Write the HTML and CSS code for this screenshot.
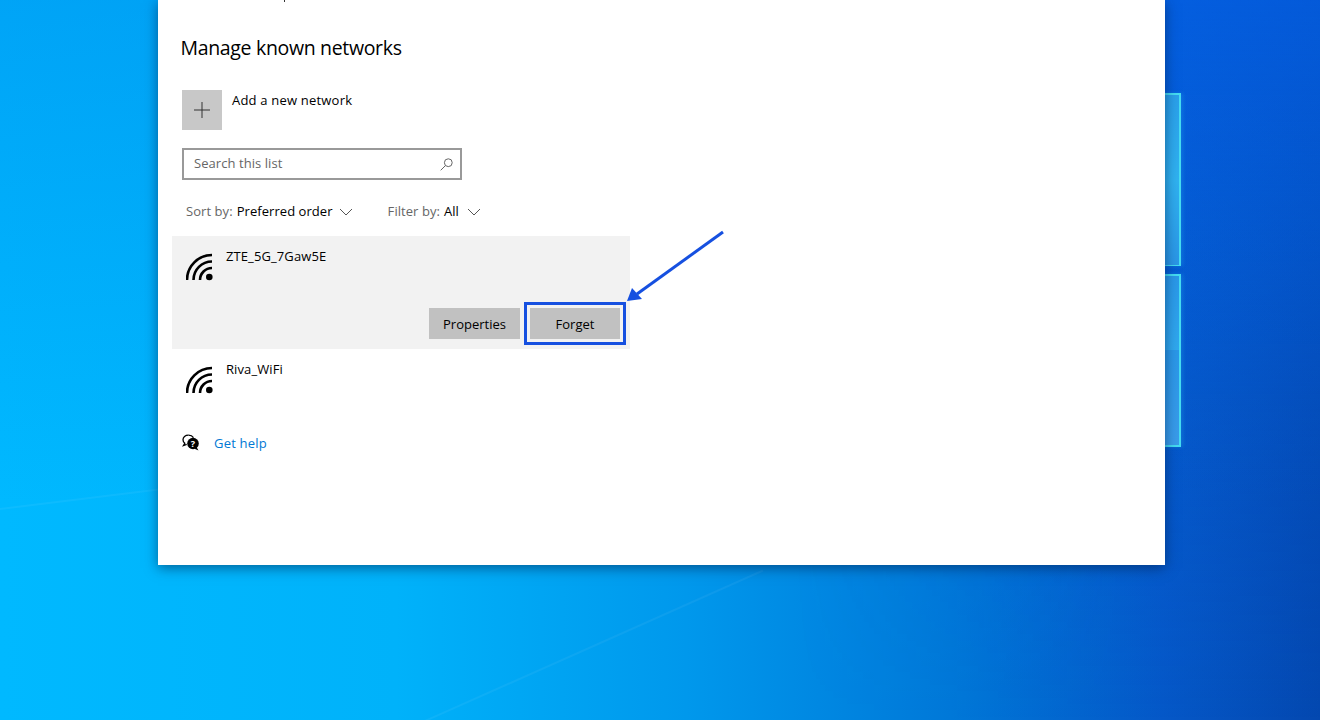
FILE: index.html
```html
<!DOCTYPE html>
<html lang="en">
<head>
<meta charset="utf-8">
<title>Manage known networks</title>
<link rel="stylesheet" href="styles.css">
</head>
<body>
<div class="desktop">
  <div class="beam beam-a"></div>
  <div class="beam beam-b"></div>
  <div class="pane pane-top"></div>
  <div class="pane pane-bottom"></div>
  <main class="window">
    <div class="clip-mark"></div>
    <h1 class="title">Manage known networks</h1>
    <div class="add-row">
      <div class="add-tile">
        <svg width="18" height="18" viewBox="0 0 18 18"><path d="M9 1v16M1 9h16" stroke="#333" stroke-width="1" fill="none"/></svg>
      </div>
      <span class="add-label">Add a new network</span>
    </div>
    <div class="search">
      <span class="search-text">Search this list</span>
      <svg class="search-icon" width="13" height="13" viewBox="0 0 13 13"><circle cx="8.300" cy="4.700" r="3.900" stroke="#666" fill="none"/><path d="M5.500 7.500L.7 12.300" stroke="#666" fill="none"/></svg>
    </div>
    <div class="filters">
      <div class="filter"><span class="muted">Sort by:</span> <span class="value">Preferred order</span>
        <svg class="chev" width="14" height="8" viewBox="0 0 14 8"><path d="M1 1l6 6 6-6" stroke="#555" fill="none"/></svg>
      </div>
      <div class="filter"><span class="muted">Filter by:</span> <span class="value">All</span>
        <svg class="chev" width="14" height="8" viewBox="0 0 14 8"><path d="M1 1l6 6 6-6" stroke="#555" fill="none"/></svg>
      </div>
    </div>
    <section class="network selected">
      <div class="net-head">
        <svg class="wifi" width="28" height="28" viewBox="0 0 28 28"><g fill="none" stroke="#000" stroke-width="2.600"><path d="M1 27A25 25 0 0 1 26 2"/><path d="M7.500 27A18.500 18.500 0 0 1 26 8.500"/><path d="M14 27A12 12 0 0 1 26 15"/></g><circle cx="23.300" cy="24" r="3.300" fill="#000"/></svg>
        <span class="net-name">ZTE_5G_7Gaw5E</span>
      </div>
      <div class="actions">
        <button class="btn btn-props">Properties</button>
        <button class="btn btn-forget">Forget</button>
      </div>
    </section>
    <section class="network">
      <div class="net-head">
        <svg class="wifi" width="28" height="28" viewBox="0 0 28 28"><g fill="none" stroke="#000" stroke-width="2.600"><path d="M1 27A25 25 0 0 1 26 2"/><path d="M7.500 27A18.500 18.500 0 0 1 26 8.500"/><path d="M14 27A12 12 0 0 1 26 15"/></g><circle cx="23.300" cy="24" r="3.300" fill="#000"/></svg>
        <span class="net-name">Riva_WiFi</span>
      </div>
    </section>
    <a class="help" href="#">
      <svg class="help-icon" width="18" height="18" viewBox="0 0 18 18"><path d="M6.500 1.200C3.200 1.200 1 3.200 1 5.800c0 1.500.7 2.700 1.800 3.500L1.500 11.500l3.200-1.200" fill="none" stroke="#000" stroke-width="1.300"/><path d="M6.500 1.200c2.300 0 4 1 5 2.500" fill="none" stroke="#000" stroke-width="1.300"/><circle cx="11" cy="9.500" r="5.800" fill="#000"/><path d="M14.500 13l2 3.500-4-1.800z" fill="#000"/><text class="help-q" x="11" y="12.600" text-anchor="middle">?</text></svg>
      <span>Get help</span>
    </a>
  </main>
  <div class="highlight"></div>
  <svg class="arrow" width="110" height="80" viewBox="0 0 110 80"><path d="M103 2L17 64" stroke="#1650e0" stroke-width="3" fill="none"/><path d="M7 71L12 58 22 69z" fill="#1650e0"/></svg>
</div>
</body>
</html>
```
FILE: styles.css
```css
* { box-sizing: border-box; }
html, body { margin: 0; height: 100%; }
body { font-family: "Open Sans", "Noto Sans", sans-serif; color: #000; overflow: hidden; }
.desktop {
  position: relative; width: 1320px; height: 720px; overflow: hidden;
  background:
    linear-gradient(180deg, rgba(0,110,225,.28) 0%, rgba(0,110,225,.12) 40%, rgba(0,110,225,0) 70%),
    linear-gradient(90deg, #00b9ff 0%, #00b2fa 30%, #0098ec 52%, #0078d8 72%, #0558c8 88%, #0448b0 100%);
}
.desktop::before {
  content: ""; position: absolute; inset: 0;
  background: linear-gradient(180deg, rgba(5,95,235,.6) 0%, rgba(5,95,225,.2) 55%, rgba(0,0,0,0) 100%);
  -webkit-mask-image: linear-gradient(90deg, transparent 0%, transparent 60%, #000 85%);
  mask-image: linear-gradient(90deg, transparent 0%, transparent 60%, #000 85%);
}
.beam { position: absolute; height: 2px; background: rgba(255,255,255,.05); transform-origin: left center; }
.beam-a { left: 0; top: 508px; width: 170px; transform: rotate(-7deg); }
.beam-b { left: 425px; top: 720px; width: 370px; transform: rotate(-24deg); }
.pane {
  position: absolute; left: 1100px; width: 81px;
  background: linear-gradient(180deg, #2aa0ea 0%, #30b2f0 50%, #2a96e6 100%);
  border: 2px solid #45dcf2; border-left: 0;
  box-shadow: 2px 0 4px rgba(60,210,255,.2);
}
.pane-top { top: 93px; height: 173px; border-bottom-width: 1px; }
.pane-bottom { top: 274px; height: 173px; background: linear-gradient(180deg, #2a98e8 0%, #30a8ee 44%, #2a98e8 44%, #3a9cea 100%); }
.window {
  position: absolute; left: 158px; top: 0; width: 1007px; height: 565px;
  background: #fff; padding: 34px 22px 0 14px; overflow: hidden;
  box-shadow: 0 3px 12px rgba(0,30,70,.55);
}
.clip-mark { position: absolute; left: 126px; top: 0; width: 1px; height: 2px; background: #333; }
.title { margin: 0 0 0 8.500px; font-size: 19.500px; line-height: 28px; font-weight: 400; letter-spacing: -.33px; }
.add-row { display: flex; gap: 10px; margin: 28px 0 0 10px; }
.add-tile { width: 40px; height: 40px; background: #c8c8c8; display: flex; align-items: center; justify-content: center; }
.add-label { font-size: 13px; line-height: 20px; letter-spacing: .2px; }
.search {
  display: flex; align-items: center; justify-content: space-between;
  width: 280px; height: 32px; margin: 18px 0 0 10px; padding: 0 7px 2px 10px; border: 2px solid #999;
}
.search-text { font-size: 13px; color: #666; letter-spacing: .06px; }
.search-icon { margin-top: 2px; }
.filters { display: flex; gap: 35px; margin: 19px 0 0 14px; height: 24px; align-items: center; font-size: 13px; letter-spacing: .06px; }
.filter { display: flex; align-items: center; gap: 4px; }
.muted { color: #666; }
.value { color: #000; }
.chev { margin-left: 4px; margin-top: 1px; }
.filter:first-child .chev { margin-left: 2px; }
.network { width: 458px; height: 82px; position: relative; }
.selected { height: 113px; background: #f2f2f2; margin-top: 13px; }
.net-head { display: flex; gap: 12px; padding: 9px 0 0 14px; }
.wifi { flex: none; margin-top: 8px; }
.net-name { font-size: 13px; line-height: 22px; letter-spacing: .1px; }
.actions { position: absolute; right: 10px; bottom: 10px; display: flex; gap: 10px; }
.btn { height: 31px; border: 0; background: #c1c1c1; font: inherit; font-size: 13px; color: #000; padding: 0; }
.btn-props { width: 91px; }
.btn-forget { width: 90px; }
.help { display: flex; align-items: center; gap: 14px; margin: 0 0 0 10px; color: #0078d4; text-decoration: none; font-size: 13px; letter-spacing: .2px; height: 24px; }
.help-icon { flex: none; }
.help-q { font-size: 9px; font-weight: 700; fill: #fff; font-family: "Open Sans", sans-serif; }
.highlight { position: absolute; left: 524px; top: 302px; width: 102px; height: 43px; border: 3px solid #1650e0; }
.arrow { position: absolute; left: 620px; top: 230px; }
```
